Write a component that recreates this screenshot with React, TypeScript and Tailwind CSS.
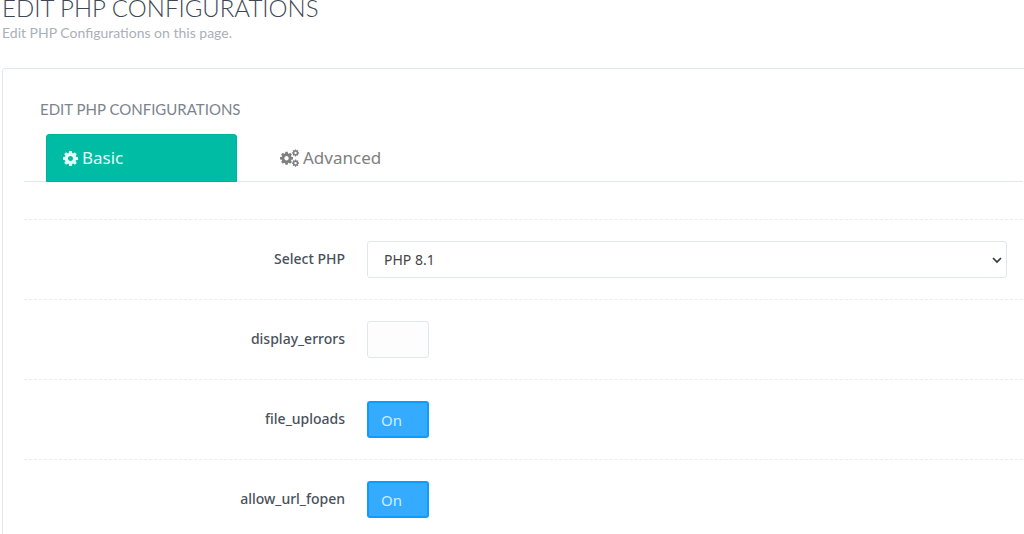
import { useState } from "react";
import type { ReactNode } from "react";

const GEAR =
  "M1024 640q0-106-75-181t-181-75-181 75-75 181 75 181 181 75 181-75 75-181zM1536 531v222q0 12-8 23t-20 13l-185 28q-19 54-39 91 35 50 107 138 10 12 10 25t-9 23q-27 37-99 108t-94 71q-12 0-26-9l-138-108q-44 23-91 38-16 136-29 186-7 28-36 28h-222q-14 0-24.5-8.500t-11.500-21.500l-28-184q-49-16-90-37l-141 107q-10 9-25 9-14 0-25-11-126-114-165-168-7-10-7-23 0-12 8-23 15-21 51-66.500t54-70.500q-27-50-41-99l-183-27q-13-2-21-12.500t-8-23.500v-222q0-12 8-23t19-13l186-28q14-46 39-92-40-57-107-138-10-12-10-24 0-10 9-23 26-36 98.500-107.500t94.500-71.500q13 0 26 10l138 107q44-23 91-38 16-136 29-186 7-28 36-28h222q14 0 24.500 8.500t11.500 21.500l28 184q49 16 90 37l142-107q9-9 24-9 13 0 25 10 129 119 165 170 7 8 7 22 0 12-8 23-15 21-51 66.500t-54 70.500q26 50 41 98l183 28q13 2 21 12.500t8 23.500z";

function GearIcon() {
  return (
    <svg viewBox="0 -128 1536 1536" className="size-[15px]" fill="currentColor" aria-hidden="true">
      <path d={GEAR} />
    </svg>
  );
}

function GearsIcon() {
  return (
    <svg viewBox="0 0 19 18" className="h-[18px] w-[19px]" fill="currentColor" aria-hidden="true">
      <path d={GEAR} transform="translate(0 3.800) scale(0.0085)" />
      <path d={GEAR} transform="translate(12 1) scale(0.0046)" />
      <path d={GEAR} transform="translate(12 11.200) scale(0.0046)" />
    </svg>
  );
}

function Row({ id, label, children }: { id: string; label: string; children: ReactNode }) {
  return (
    <div className="flex items-start border-t border-dashed border-[#ebedef] py-[21px] pr-4">
      <label htmlFor={id} className="w-[321px] shrink-0 pt-2 text-right text-[14px] leading-5 font-medium text-[#49515b]">
        {label}
      </label>
      <div className="ml-[22px] min-w-0 flex-1">{children}</div>
    </div>
  );
}

function Toggle({ id, initial = false }: { id: string; initial?: boolean }) {
  const [on, setOn] = useState(initial);
  return (
    <label
      className={
        "relative block h-[37px] w-[62px] cursor-pointer rounded-[3px] pt-[7px] pl-3 text-[15px] leading-5 " +
        (on ? "border-2 border-[#0f9bff] bg-[#35abff] text-[#cfeaff]" : "border border-[#dfe8f1] bg-[#fefdfe]")
      }
    >
      <input id={id} type="checkbox" className="sr-only" checked={on} onChange={(e) => setOn(e.target.checked)} />
      {on ? "On" : ""}
    </label>
  );
}

export default function App() {
  const [tab, setTab] = useState("basic");
  const tabBase = "-mb-px flex h-12 w-[191px] items-center gap-1 rounded-t-[3px] pl-4 text-[17px] leading-6 ";
  const active = "border border-[#00b19b] bg-[#00bca4] text-[#e6faf7]";
  const idle = "border border-transparent text-[#808080]";
  return (
    <main className="overflow-hidden bg-white pl-[2px] font-['Noto_Sans','Open_Sans',sans-serif]">
      <header className="font-['Lato',sans-serif]">
        <h1 className="-mt-1 text-[24px] leading-6 font-light text-[#3e4855] uppercase">Edit PHP Configurations</h1>
        <p className="mt-[5px] text-[14px] leading-4 text-[#a9b0b9]">Edit PHP Configurations on this page.</p>
      </header>
      <section className="-mr-1 mt-[27px] rounded-[3px] border border-[#dfe8f1] pr-1 pt-[30px] pl-[21px]">
        <h2 className="pl-4 font-['Lato',sans-serif] text-[15px] leading-5 text-[#7b848e] uppercase">
          Edit PHP Configurations
        </h2>
        <div role="tablist" className="mt-[15px] flex gap-[26px] border-b border-[#dfe8f1] pl-[22px]">
          <button
            role="tab"
            aria-selected={tab === "basic"}
            onClick={() => setTab("basic")}
            className={tabBase + (tab === "basic" ? active : idle)}
          >
            <GearIcon />
            Basic
          </button>
          <button
            role="tab"
            aria-selected={tab === "advanced"}
            onClick={() => setTab("advanced")}
            className={tabBase + (tab === "advanced" ? active : idle)}
          >
            <GearsIcon />
            Advanced
          </button>
        </div>
        <form className="mt-[37px]">
          <Row id="php" label="Select PHP">
            <div className="relative">
              <select
                id="php"
                className="block h-[37px] w-full appearance-none rounded-[3px] border border-[#dfe8f1] bg-white pl-4 text-[14px] text-[#444]"
              >
                <option>PHP 8.1</option>
              </select>
              <svg
                viewBox="0 0 10 8"
                className="pointer-events-none absolute top-[15px] right-[5px] h-2 w-[10px]"
                fill="none"
                stroke="#35363b"
                strokeWidth="1.7"
                aria-hidden="true"
              >
                <path d="M1 2l4 4 4-4" />
              </svg>
            </div>
          </Row>
          <Row id="display_errors" label="display_errors">
            <Toggle id="display_errors" />
          </Row>
          <Row id="file_uploads" label="file_uploads">
            <Toggle id="file_uploads" initial />
          </Row>
          <Row id="allow_url_fopen" label="allow_url_fopen">
            <Toggle id="allow_url_fopen" initial />
          </Row>
        </form>
      </section>
    </main>
  );
}
